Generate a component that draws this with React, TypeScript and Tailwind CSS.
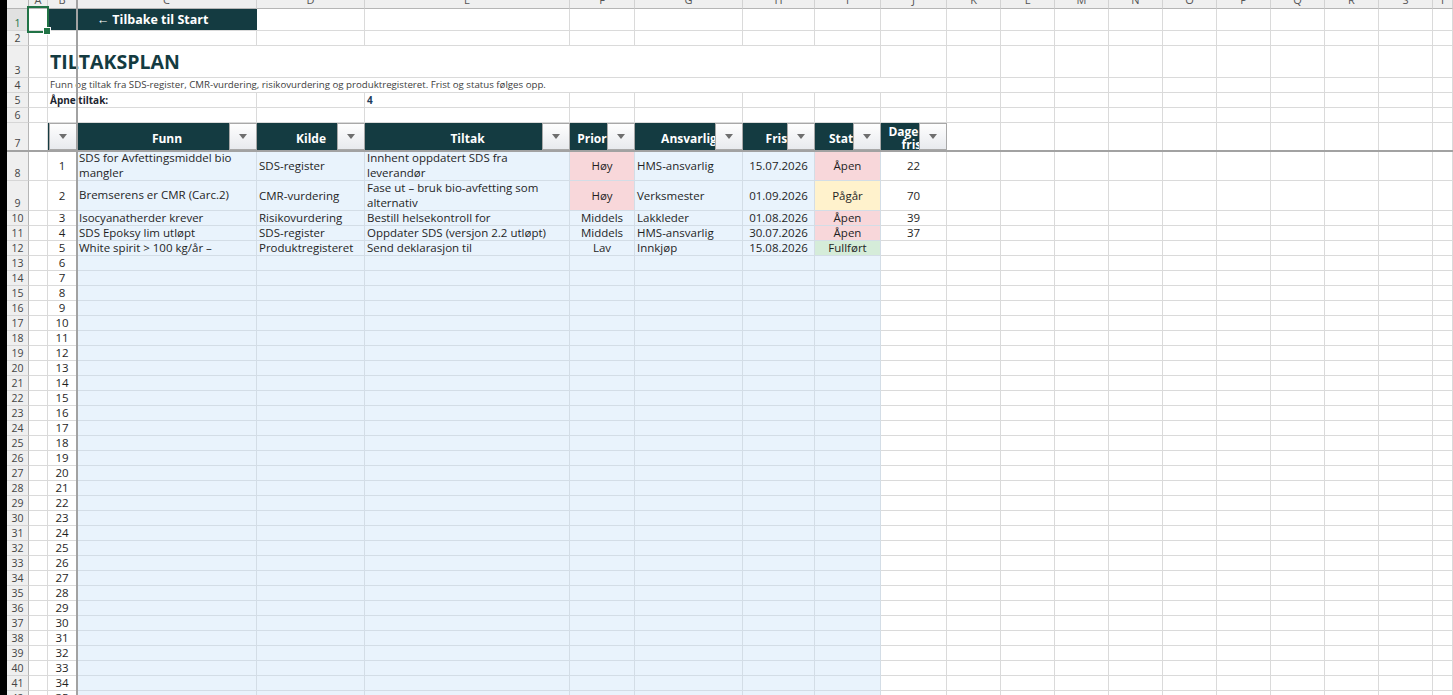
import React from "react";

const LETTERS = ["A","B","C","D","E","F","G","H","I","J","K","L","M","N","O","P","Q","R","S","T"];

const WHITE = "border-r border-b border-[#dadada]";
const BLUE = "bg-[#e9f3fc] border-r border-b border-[#d3dde6]";
const PINK = "bg-[#f8d7da] border-r border-b border-[#d3dde6]";
const YELLOW = "bg-[#fff2cc] border-r border-b border-[#d3dde6]";
const GREEN = "bg-[#d5ecd9] border-r border-b border-[#d3dde6]";
const TEAL = "bg-[#143b41] border-b border-[#143b41] relative overflow-hidden";

type Row = {
  c: string[];
  d: string;
  e: string[];
  f: string;
  fc: string;
  g: string;
  h: string;
  i: string;
  ic: string;
  j: string;
};

const ROWS: Row[] = [
  { c: ["SDS for Avfettingsmiddel bio", "mangler"], d: "SDS-register", e: ["Innhent oppdatert SDS fra", "leverandør"], f: "Høy", fc: PINK, g: "HMS-ansvarlig", h: "15.07.2026", i: "Åpen", ic: PINK, j: "22" },
  { c: ["Bremserens er CMR (Carc.2)"], d: "CMR-vurdering", e: ["Fase ut – bruk bio-avfetting som", "alternativ"], f: "Høy", fc: PINK, g: "Verksmester", h: "01.09.2026", i: "Pågår", ic: YELLOW, j: "70" },
  { c: ["Isocyanatherder krever"], d: "Risikovurdering", e: ["Bestill helsekontroll for"], f: "Middels", fc: BLUE, g: "Lakkleder", h: "01.08.2026", i: "Åpen", ic: PINK, j: "39" },
  { c: ["SDS Epoksy lim utløpt"], d: "SDS-register", e: ["Oppdater SDS (versjon 2.2 utløpt)"], f: "Middels", fc: BLUE, g: "HMS-ansvarlig", h: "30.07.2026", i: "Åpen", ic: PINK, j: "37" },
  { c: ["White spirit > 100 kg/år –"], d: "Produktregisteret", e: ["Send deklarasjon til"], f: "Lav", fc: BLUE, g: "Innkjøp", h: "15.08.2026", i: "Fullført", ic: GREEN, j: "" },
];

function RowHdr({ n, active }: { n: number; active?: boolean }) {
  return (
    <div
      className={
        active
          ? "bg-[#e1e1e1] border-r border-b border-r-[#b5b5b5] border-b-[#d6d6d6] flex items-end justify-center text-[10.5px] leading-[14px] text-[#217346]"
          : "bg-[#efefef] border-r border-b border-r-[#b5b5b5] border-b-[#d6d6d6] flex items-end justify-center text-[10.5px] leading-[14px] text-[#444]"
      }
    >
      {n}
    </div>
  );
}

function Blanks({ n, k }: { n: number; k: string }) {
  return (
    <>
      {Array.from({ length: n }, (_, i) => (
        <div key={k + i} className={WHITE} />
      ))}
    </>
  );
}

function FilterBtn() {
  return (
    <div className="absolute right-0 top-0 bottom-0 w-[28px] border border-[#a8a8a8] bg-linear-to-b from-[#fefefe] to-[#e8eaee] flex items-center justify-center">
      <div className="w-0 h-0 border-l-[4px] border-r-[4px] border-t-[5px] border-l-transparent border-r-transparent border-t-[#6e6e6e]" />
    </div>
  );
}

function HeadCell({ label, two }: { label?: string; two?: string[] }) {
  return (
    <div className={TEAL}>
      <div className="absolute left-0 top-0 bottom-0 right-[28px] overflow-hidden">
        <div className="h-full w-[calc(100%+28px)] pt-[3px] flex flex-col items-center justify-center text-white font-bold text-[12px] leading-[13px] whitespace-nowrap">
          {two ? two.map((l, i) => <span key={i}>{l}</span>) : <span>{label}</span>}
        </div>
      </div>
      <FilterBtn />
    </div>
  );
}

function Lines({ lines }: { lines: string[] }) {
  return (
    <div className="flex flex-col leading-[14.5px]">
      {lines.map((l, i) => (
        <span key={i} className="whitespace-nowrap">{l}</span>
      ))}
    </div>
  );
}

export default function App() {
  const body: React.ReactNode[] = [];
  for (let r = 8; r <= 42; r++) {
    const d = ROWS[r - 8];
    const k = "r" + r;
    body.push(<RowHdr key={k + "h"} n={r} />);
    body.push(<div key={k + "a"} className={WHITE} />);
    body.push(
      <div key={k + "b"} className={WHITE + " flex items-center justify-center"}>
        {r - 7}
      </div>
    );
    if (d) {
      body.push(
        <div key={k + "c"} className={BLUE + " flex items-center pl-[2px] overflow-hidden"}>
          <Lines lines={d.c} />
        </div>
      );
      body.push(
        <div key={k + "d"} className={BLUE + " flex items-center pl-[2px] overflow-hidden whitespace-nowrap"}>
          {d.d}
        </div>
      );
      body.push(
        <div key={k + "e"} className={BLUE + " flex items-center pl-[2px] overflow-hidden"}>
          <Lines lines={d.e} />
        </div>
      );
      body.push(
        <div key={k + "f"} className={d.fc + " flex items-center justify-center"}>
          {d.f}
        </div>
      );
      body.push(
        <div key={k + "g"} className={BLUE + " flex items-center pl-[2px] whitespace-nowrap overflow-hidden"}>
          {d.g}
        </div>
      );
      body.push(
        <div key={k + "hh"} className={BLUE + " flex items-center justify-center"}>
          {d.h}
        </div>
      );
      body.push(
        <div key={k + "i"} className={d.ic + " flex items-center justify-center"}>
          {d.i}
        </div>
      );
      body.push(
        <div key={k + "j"} className={WHITE + " flex items-center justify-center"}>
          {d.j}
        </div>
      );
    } else {
      for (let i = 0; i < 7; i++) body.push(<div key={k + "x" + i} className={BLUE} />);
      body.push(<div key={k + "j"} className={WHITE} />);
    }
    body.push(<Blanks key={k + "rest"} n={10} k={k + "w"} />);
  }

  return (
    <div className="relative w-[1453px] h-[695px] overflow-hidden bg-white flex font-['Open_Sans',_'Noto_Sans',_sans-serif] text-[#1f1f1f]">
      <div className="w-[7px] shrink-0 bg-black" />
      <div className="flex-1 grid grid-cols-[22px_19px_29px_180px_108px_205px_65px_108px_72px_66px_66px_repeat(9,54px)_1fr] grid-rows-[9px_22px_15px_32px_15px_15px_15px_28px_30px_30px_repeat(33,15px)] text-[11.5px]">
        {/* column letters */}
        <div className="bg-[#efefef] border-r border-b border-r-[#b5b5b5] border-b-[#b5b5b5]" />
        {LETTERS.map((l) => (
          <div
            key={"L" + l}
            className="bg-[#efefef] border-r border-b border-r-[#d2d2d2] border-b-[#b5b5b5] overflow-hidden flex justify-center"
          >
            <span className="text-[11px] leading-[11px] mt-[-6px] text-[#555]">{l}</span>
          </div>
        ))}

        {/* row 1 */}
        <RowHdr n={1} active />
        <div className={WHITE} />
        <div className="col-span-2 bg-[#143b41] border-b border-[#dadada] pt-[1px] flex items-center justify-center text-white font-bold text-[12.5px]">
          ← Tilbake til Start
        </div>
        <Blanks n={17} k="r1" />

        {/* row 2 */}
        <RowHdr n={2} />
        <Blanks n={20} k="r2" />

        {/* row 3 */}
        <RowHdr n={3} />
        <div className={WHITE} />
        <div className="col-span-8 border-r border-b border-[#dadada] flex items-end pl-[2px] pb-[6px] text-[19.5px] leading-none font-bold text-[#143b41]">
          TILTAKSPLAN
        </div>
        <Blanks n={11} k="r3" />

        {/* row 4 */}
        <RowHdr n={4} />
        <div className={WHITE} />
        <div className="col-span-9 border-r border-b border-[#dadada] flex items-end pl-[2px] pb-[2px] text-[9.7px] leading-none text-[#404040] whitespace-nowrap">
          Funn og tiltak fra SDS-register, CMR-vurdering, risikovurdering og produktregisteret. Frist og status følges opp.
        </div>
        <Blanks n={10} k="r4" />

        {/* row 5 */}
        <RowHdr n={5} />
        <div className={WHITE} />
        <div className={WHITE + " overflow-visible whitespace-nowrap flex items-end pl-[2px] pb-[2px] text-[10px] leading-none font-bold text-[#1c2530]"}>
          Åpne tiltak:
        </div>
        <div className={WHITE} />
        <div className={WHITE} />
        <div className={WHITE + " flex items-end pl-[2px] pb-[2px] text-[10px] leading-none font-bold text-[#1f3d5c]"}>
          4
        </div>
        <Blanks n={15} k="r5" />

        {/* row 6 */}
        <RowHdr n={6} />
        <Blanks n={20} k="r6" />

        {/* row 7 header */}
        <RowHdr n={7} />
        <div className={WHITE} />
        <HeadCell label="" />
        <HeadCell label="Funn" />
        <HeadCell label="Kilde" />
        <HeadCell label="Tiltak" />
        <HeadCell label="Prioritet" />
        <HeadCell label="Ansvarlig" />
        <HeadCell label="Frist" />
        <HeadCell label="Status" />
        <HeadCell two={["Dager til", "frist"]} />
        <Blanks n={10} k="r7" />

        {body}
      </div>

      {/* frozen pane lines */}
      <div className="absolute left-[76px] top-0 bottom-0 w-[2px] bg-[#a2a2a2]" />
      <div className="absolute left-[7px] right-0 top-[150px] h-[2px] bg-[#a2a2a2]" />

      {/* active cell A1 */}
      <div className="absolute left-[27px] top-[6px] w-[22px] h-[27px] border-2 border-[#217346]" />
      <div className="absolute left-[43px] top-[27px] w-[8px] h-[8px] bg-[#217346] border border-white" />
    </div>
  );
}
